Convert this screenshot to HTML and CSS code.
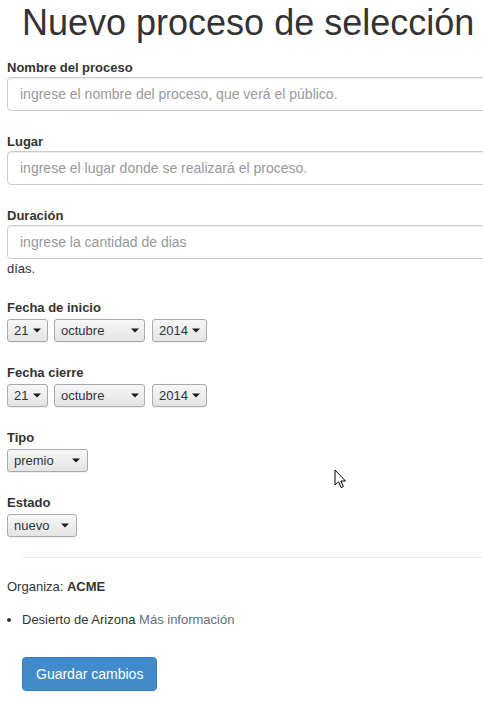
FILE: index.html
```html
<!DOCTYPE html>
<html lang="es">
<head>
<meta charset="utf-8">
<title>Nuevo proceso de selección</title>
<link rel="stylesheet" href="styles.css">
</head>
<body>
<div class="page">
  <h1 class="title">Nuevo proceso de selección</h1>
  <form class="form">
    <div class="group">
      <label class="label">Nombre del proceso</label>
      <input class="input" type="text" placeholder="ingrese el nombre del proceso, que verá el público.">
    </div>
    <div class="group">
      <label class="label">Lugar</label>
      <input class="input" type="text" placeholder="ingrese el lugar donde se realizará el proceso.">
    </div>
    <div class="group">
      <label class="label">Duración</label>
      <input class="input" type="text" placeholder="ingrese la cantidad de dias">
      <div class="unit">días.</div>
    </div>
    <div class="group">
      <label class="label">Fecha de inicio</label>
      <div class="selects">
        <span class="select w-day"><span class="sel-text">21</span><svg class="arrow" width="8" height="5" viewBox="0 0 8 5"><path d="M0 0.5H8L4 4.5Z"/></svg></span>
        <span class="select w-month"><span class="sel-text">octubre</span><svg class="arrow" width="8" height="5" viewBox="0 0 8 5"><path d="M0 0.5H8L4 4.5Z"/></svg></span>
        <span class="select w-year"><span class="sel-text">2014</span><svg class="arrow" width="8" height="5" viewBox="0 0 8 5"><path d="M0 0.5H8L4 4.5Z"/></svg></span>
      </div>
    </div>
    <div class="group">
      <label class="label">Fecha cierre</label>
      <div class="selects">
        <span class="select w-day"><span class="sel-text">21</span><svg class="arrow" width="8" height="5" viewBox="0 0 8 5"><path d="M0 0.5H8L4 4.5Z"/></svg></span>
        <span class="select w-month"><span class="sel-text">octubre</span><svg class="arrow" width="8" height="5" viewBox="0 0 8 5"><path d="M0 0.5H8L4 4.5Z"/></svg></span>
        <span class="select w-year"><span class="sel-text">2014</span><svg class="arrow" width="8" height="5" viewBox="0 0 8 5"><path d="M0 0.5H8L4 4.5Z"/></svg></span>
      </div>
    </div>
    <div class="group">
      <label class="label">Tipo</label>
      <div class="selects">
        <span class="select w-tipo"><span class="sel-text">premio</span><svg class="arrow" width="8" height="5" viewBox="0 0 8 5"><path d="M0 0.5H8L4 4.5Z"/></svg></span>
      </div>
    </div>
    <div class="group last">
      <label class="label">Estado</label>
      <div class="selects">
        <span class="select w-estado"><span class="sel-text">nuevo</span><svg class="arrow" width="8" height="5" viewBox="0 0 8 5"><path d="M0 0.5H8L4 4.5Z"/></svg></span>
      </div>
    </div>
    <hr class="rule">
    <p class="org">Organiza: <strong>ACME</strong></p>
    <ul class="places">
      <li>Desierto de Arizona <a class="more" href="#">Más información</a></li>
    </ul>
    <button class="btn" type="button">Guardar cambios</button>
  </form>
</div>
<svg class="cursor" width="13" height="20" viewBox="0 0 13 20"><path d="M1 1V16L4.5 12.8L7.2 18.6L9.4 17.6L6.8 12H11.5Z" fill="#fff" stroke="#000" stroke-width="1" stroke-linejoin="miter"/></svg>
</body>
</html>
```
FILE: styles.css
```css
html, body {
  margin: 0;
  padding: 0;
  overflow: hidden;
  background: #fff;
}
body {
  font-family: "Liberation Sans", Arial, Helvetica, sans-serif;
  color: #333;
  font-size: 13px;
  line-height: 16px;
  position: relative;
  min-height: 701px;
}
.page {
  padding-left: 7px;
  width: 560px;
}
.title {
  margin: 3px 0 0;
  padding-left: 15px;
  font-size: 36px;
  line-height: 40px;
  font-weight: normal;
  color: #333;
}
.form {
  margin: 17px 0 0;
}
.group {
  margin-bottom: 23px;
}
.group.last {
  margin-bottom: 0;
}
.label {
  display: block;
  font-weight: bold;
  font-size: 13px;
  line-height: 16px;
  margin-bottom: 1px;
}
.input {
  display: block;
  box-sizing: border-box;
  width: 540px;
  height: 34px;
  margin: 0;
  padding: 6px 12px;
  font-family: inherit;
  font-size: 14px;
  line-height: 20px;
  color: #555;
  border: 1px solid #ccc;
  border-radius: 4px;
  box-shadow: inset 0 1px 1px rgba(0,0,0,.075);
  outline: none;
}
.input::placeholder {
  color: #999;
}
.unit {
  padding-top: 1px;
  line-height: 17px;
}
.selects {
  display: flex;
  align-items: center;
  margin-top: 3px;
}
.select {
  box-sizing: border-box;
  height: 23px;
  display: flex;
  align-items: center;
  justify-content: space-between;
  padding: 0 6px 0 6px;
  border: 1px solid #a9a9a9;
  border-radius: 3px;
  background: linear-gradient(#f7f7f7, #e4e4e4);
  box-shadow: 0 1px 0 rgba(0,0,0,.06);
  color: #2e3436;
  font-size: 13px;
}
.arrow {
  display: block;
  fill: #1a1a1a;
}
.w-day { width: 41px; margin-right: 6px; }
.w-month { width: 91px; margin-right: 7px; padding-right: 5px; }
.w-year { width: 55px; }
.w-tipo { width: 81px; padding-right: 7px; }
.w-estado { width: 70px; padding-right: 7px; }
.rule {
  margin: 20px 0 0 15px;
  border: 0;
  border-top: 1px solid #eee;
  height: 0;
}
.org {
  margin: 21px 0 0;
}
.places {
  margin: 17px 0 0;
  padding-left: 15px;
}
.more {
  color: #66707a;
  text-decoration: none;
}
.btn {
  display: block;
  margin: 29px 0 0 15px;
  height: 34px;
  padding: 6px 13px;
  font-family: inherit;
  font-size: 14px;
  line-height: 20px;
  color: #fff;
  background: #428bca;
  border: 1px solid #357ebd;
  border-radius: 4px;
}
.cursor {
  position: absolute;
  left: 334px;
  top: 469px;
}
```
